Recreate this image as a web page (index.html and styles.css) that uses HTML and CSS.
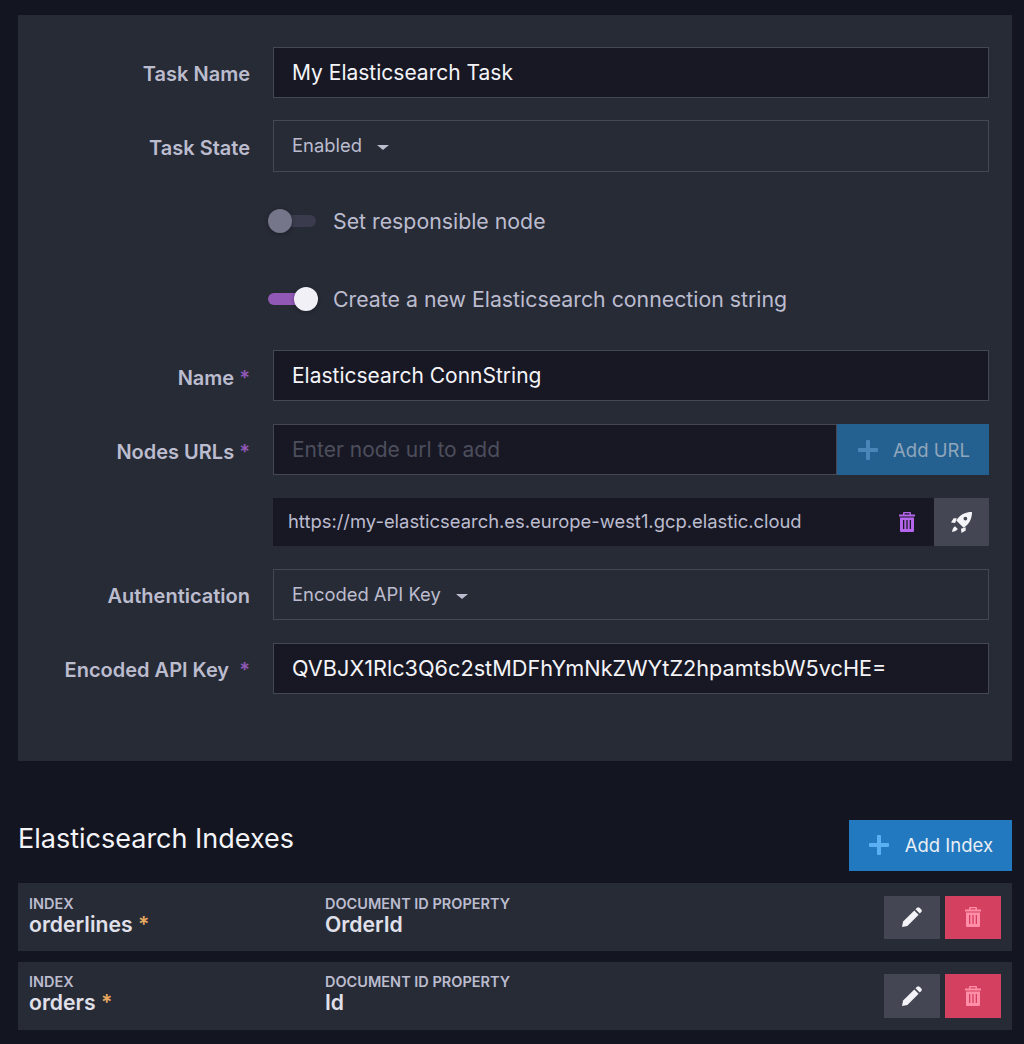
FILE: index.html
```html
<!DOCTYPE html>
<html lang="en">
<head>
    <meta charset="UTF-8">
    <meta name="viewport" content="width=device-width, initial-scale=1.0">
    <title>Edit Elasticsearch ETL</title>
    <link rel="stylesheet" href="styles.css">
</head>
<body>
    <svg class="icon-defs" width="0" height="0">
        <symbol id="icon-trash" viewBox="0 0 16 20">
            <path fill-rule="evenodd" d="M5 0h6a1 1 0 0 1 1 1v1.500h4v2H0v-2h4V1a1 1 0 0 1 1-1zm.5 1.200v1.300h5V1.200z"/>
            <path fill-rule="evenodd" d="M1 5.500h14V19a1 1 0 0 1-1 1H2a1 1 0 0 1-1-1zM4 8v9h1.300V8zm3.350 0v9h1.300V8zm3.350 0v9H12V8z"/>
        </symbol>
        <symbol id="icon-pencil" viewBox="0 0 20 20">
            <path d="M0 20l1.100-5.400L12.300 3.400l4.300 4.300L5.400 18.900z"/>
            <path d="M13.500 2.200l1.500-1.500a2 2 0 0 1 2.500 0l1.800 1.800a2 2 0 0 1 0 2.500l-1.500 1.500z"/>
        </symbol>
    </svg>

    <div class="panel">
        <div class="form-row task-name-row">
            <label class="form-label">Task Name</label>
            <input type="text" class="form-input" value="My Elasticsearch Task">
        </div>
        <div class="form-row task-state-row">
            <label class="form-label">Task State</label>
            <button class="dropdown">Enabled <span class="caret"></span></button>
        </div>
        <div class="toggle-row">
            <span class="toggle"><span class="toggle-knob"></span></span>
            <span class="toggle-text">Set responsible node</span>
        </div>
        <div class="toggle-row">
            <span class="toggle toggle-on"><span class="toggle-knob"></span></span>
            <span class="toggle-text">Create a new Elasticsearch connection string</span>
        </div>
        <div class="form-row">
            <label class="form-label label-required">Name <span class="required">*</span></label>
            <input type="text" class="form-input" value="Elasticsearch ConnString">
        </div>
        <div class="form-row">
            <label class="form-label label-required">Nodes URLs <span class="required">*</span></label>
            <div class="input-group">
                <input type="text" class="form-input" placeholder="Enter node url to add">
                <button class="add-url">
                    <span class="plus"></span>
                    Add URL
                </button>
            </div>
        </div>
        <div class="url-row">
            <div class="url-item">
                <span>https://my-elasticsearch.es.europe-west1.gcp.elastic.cloud</span>
                <svg class="url-trash"><use href="#icon-trash"/></svg>
            </div>
            <button class="test-button">
                <svg class="rocket" viewBox="0 0 20 20">
                    <path fill-rule="evenodd" d="M20 0c-6.500 0-11.500 2.500-15 8l7 7C17.500 11.500 20 6.500 20 0zm-6.300 4.500a1.800 1.800 0 1 1 0 3.600 1.800 1.800 0 0 1 0-3.600z"/>
                    <path d="M5.500 6H2.500L0 10l4 .5zM14 14.500V17.500L10 20l-.5-4zM3.800 13.500C2.300 14.500 1.200 16.500 1 19c2.500-.2 4.500-1.300 5.500-2.800z"/>
                </svg>
            </button>
        </div>
        <div class="form-row">
            <label class="form-label">Authentication</label>
            <button class="dropdown">Encoded API Key <span class="caret"></span></button>
        </div>
        <div class="form-row">
            <label class="form-label">Encoded API Key &nbsp;<span class="required">*</span></label>
            <input type="text" class="form-input key-input" value="QVBJX1Rlc3Q6c2stMDFhYmNkZWYtZ2hpamtsbW5vcHE=">
        </div>
    </div>

    <div class="section-head">
        <h2 class="section-title">Elasticsearch Indexes</h2>
        <button class="add-index">
            <span class="plus"></span>
            Add Index
        </button>
    </div>

    <div class="index-item">
        <div class="index-col">
            <div class="index-caption">INDEX</div>
            <div class="index-value">orderlines <span class="index-star">*</span></div>
        </div>
        <div class="index-col">
            <div class="index-caption">DOCUMENT ID PROPERTY</div>
            <div class="index-value">OrderId</div>
        </div>
        <div class="index-actions">
            <button class="edit-button"><svg class="pencil"><use href="#icon-pencil"/></svg></button>
            <button class="delete-button"><svg class="trash"><use href="#icon-trash"/></svg></button>
        </div>
    </div>
    <div class="index-item">
        <div class="index-col">
            <div class="index-caption">INDEX</div>
            <div class="index-value">orders <span class="index-star">*</span></div>
        </div>
        <div class="index-col">
            <div class="index-caption">DOCUMENT ID PROPERTY</div>
            <div class="index-value">Id</div>
        </div>
        <div class="index-actions">
            <button class="edit-button"><svg class="pencil"><use href="#icon-pencil"/></svg></button>
            <button class="delete-button"><svg class="trash"><use href="#icon-trash"/></svg></button>
        </div>
    </div>
</body>
</html>
```
FILE: styles.css
```css
* {
    margin: 0;
    padding: 0;
    box-sizing: border-box;
    font-family: Inter, "Noto Sans", sans-serif;
}
body {
    background-color: #131521;
    padding: 15px 12px 14px 18px;
    overflow: hidden;
}
button {
    border: none;
    cursor: pointer;
}
.icon-defs {
    position: absolute;
}
.panel {
    background-color: #272b36;
    padding: 32px 23px 67px 0;
    height: 746px;
}
.form-row {
    display: flex;
    align-items: center;
    height: 51px;
    margin-bottom: 23px;
}
.task-name-row {
    margin-bottom: 22px;
}
.task-state-row {
    height: 52px;
}
.form-label {
    flex: 0 0 232px;
    margin-right: 23px;
    padding-top: 3px;
    text-align: right;
    font-size: 20px;
    font-weight: 600;
    color: #bcbccf;
}
.label-required {
    padding-top: 5px;
}
.required {
    color: #9159b5;
}
.form-input {
    flex: 1;
    width: 100%;
    height: 100%;
    padding: 0 18px;
    background-color: #181824;
    border: 1px solid #444854;
    color: #f4f4f8;
    font-size: 21px;
}
.key-input {
    padding-bottom: 2px;
    font-size: 21.700px;
}
.form-input::placeholder {
    color: #4c4e5c;
}
.form-input:focus {
    outline: none;
}
.dropdown {
    flex: 1;
    height: 100%;
    padding: 0 18px 2px;
    display: flex;
    align-items: center;
    background-color: transparent;
    border: 1px solid #444854;
    color: #bcbccf;
    font-size: 18.400px;
}
.caret {
    margin-left: 15px;
    margin-top: 5px;
    border-left: 6px solid transparent;
    border-right: 6px solid transparent;
    border-top: 5px solid #bcbccf;
}
.toggle-row {
    display: flex;
    align-items: center;
    height: 52px;
    margin-bottom: 25.500px;
    padding-left: 250px;
}
.toggle {
    position: relative;
    width: 48px;
    height: 12px;
    border-radius: 6px;
    background-color: #3a3b4c;
}
.toggle-knob {
    position: absolute;
    top: -6px;
    left: 0;
    width: 24px;
    height: 24px;
    border-radius: 50%;
    background-color: #75768a;
    box-shadow: 0 1px 4px rgba(0, 0, 0, 0.3);
}
.toggle-on {
    background-color: #9159b5;
}
.toggle-on .toggle-knob {
    left: 26px;
    background-color: #f0f0f6;
}
.toggle-text {
    margin-left: 17px;
    font-size: 21.300px;
    color: #bcbccf;
}
.input-group {
    flex: 1;
    display: flex;
    height: 100%;
}
.add-url {
    flex: 0 0 152px;
    display: flex;
    align-items: center;
    justify-content: center;
    gap: 15px;
    padding-left: 2px;
    background-color: #256190;
    color: #8fa6bc;
    font-size: 18.500px;
}
.plus {
    position: relative;
    display: block;
    width: 20px;
    height: 20px;
}
.plus::before, .plus::after {
    content: "";
    position: absolute;
    background-color: currentColor;
    border-radius: 1px;
}
.plus::before {
    left: 0;
    right: 0;
    top: 8px;
    height: 4px;
}
.plus::after {
    top: 0;
    bottom: 0;
    left: 8px;
    width: 4px;
}
.add-url .plus {
    color: #4a86b8;
}
.url-row {
    display: flex;
    height: 48px;
    margin-left: 255px;
    margin-bottom: 23px;
}
.url-item {
    flex: 1;
    display: flex;
    align-items: center;
    justify-content: space-between;
    padding: 0 19px 0 15px;
    background-color: #181824;
    color: #bcbccf;
    font-size: 18.400px;
}
.url-item span {
    padding-bottom: 3px;
}
.url-trash {
    width: 16px;
    height: 20px;
    fill: #b565ec;
}
.test-button {
    flex: 0 0 55px;
    display: flex;
    align-items: center;
    justify-content: center;
    background-color: #444653;
}
.rocket {
    width: 21px;
    height: 21px;
    fill: #f4f4f8;
}
.section-head {
    display: flex;
    justify-content: space-between;
    align-items: flex-start;
    margin-top: 59px;
    margin-bottom: 12.400px;
}
.section-title {
    margin-top: 2px;
    font-size: 27px;
    font-weight: 400;
    color: #f4f4f8;
}
.add-index {
    display: flex;
    align-items: center;
    gap: 16px;
    height: 51px;
    padding: 0 19px 2px 20px;
    background-color: #2279bf;
    color: #e8eef5;
    font-size: 18.500px;
}
.add-index .plus {
    color: #5ab0f2;
}
.index-item {
    display: flex;
    align-items: center;
    height: 68px;
    margin-bottom: 10.500px;
    padding: 0 11px;
    background-color: #272b36;
}
.index-col {
    flex: 0 0 296px;
    padding-bottom: 2px;
}
.index-caption {
    font-size: 14.500px;
    line-height: 16px;
    font-weight: 600;
    color: #bcbccf;
}
.index-value {
    font-size: 21.200px;
    line-height: 25px;
    font-weight: 600;
    color: #e0e0ea;
}
.index-star {
    color: #e8a85f;
}
.index-actions {
    margin-left: auto;
    display: flex;
    gap: 5px;
}
.edit-button, .delete-button {
    display: flex;
    align-items: center;
    justify-content: center;
    width: 56px;
    height: 43.500px;
}
.edit-button {
    background-color: #444653;
}
.delete-button {
    background-color: #d44060;
}
.pencil {
    width: 20px;
    height: 20px;
    fill: #f4f4f8;
}
.trash {
    width: 16px;
    height: 20px;
    fill: #ff8ea6;
}
```
